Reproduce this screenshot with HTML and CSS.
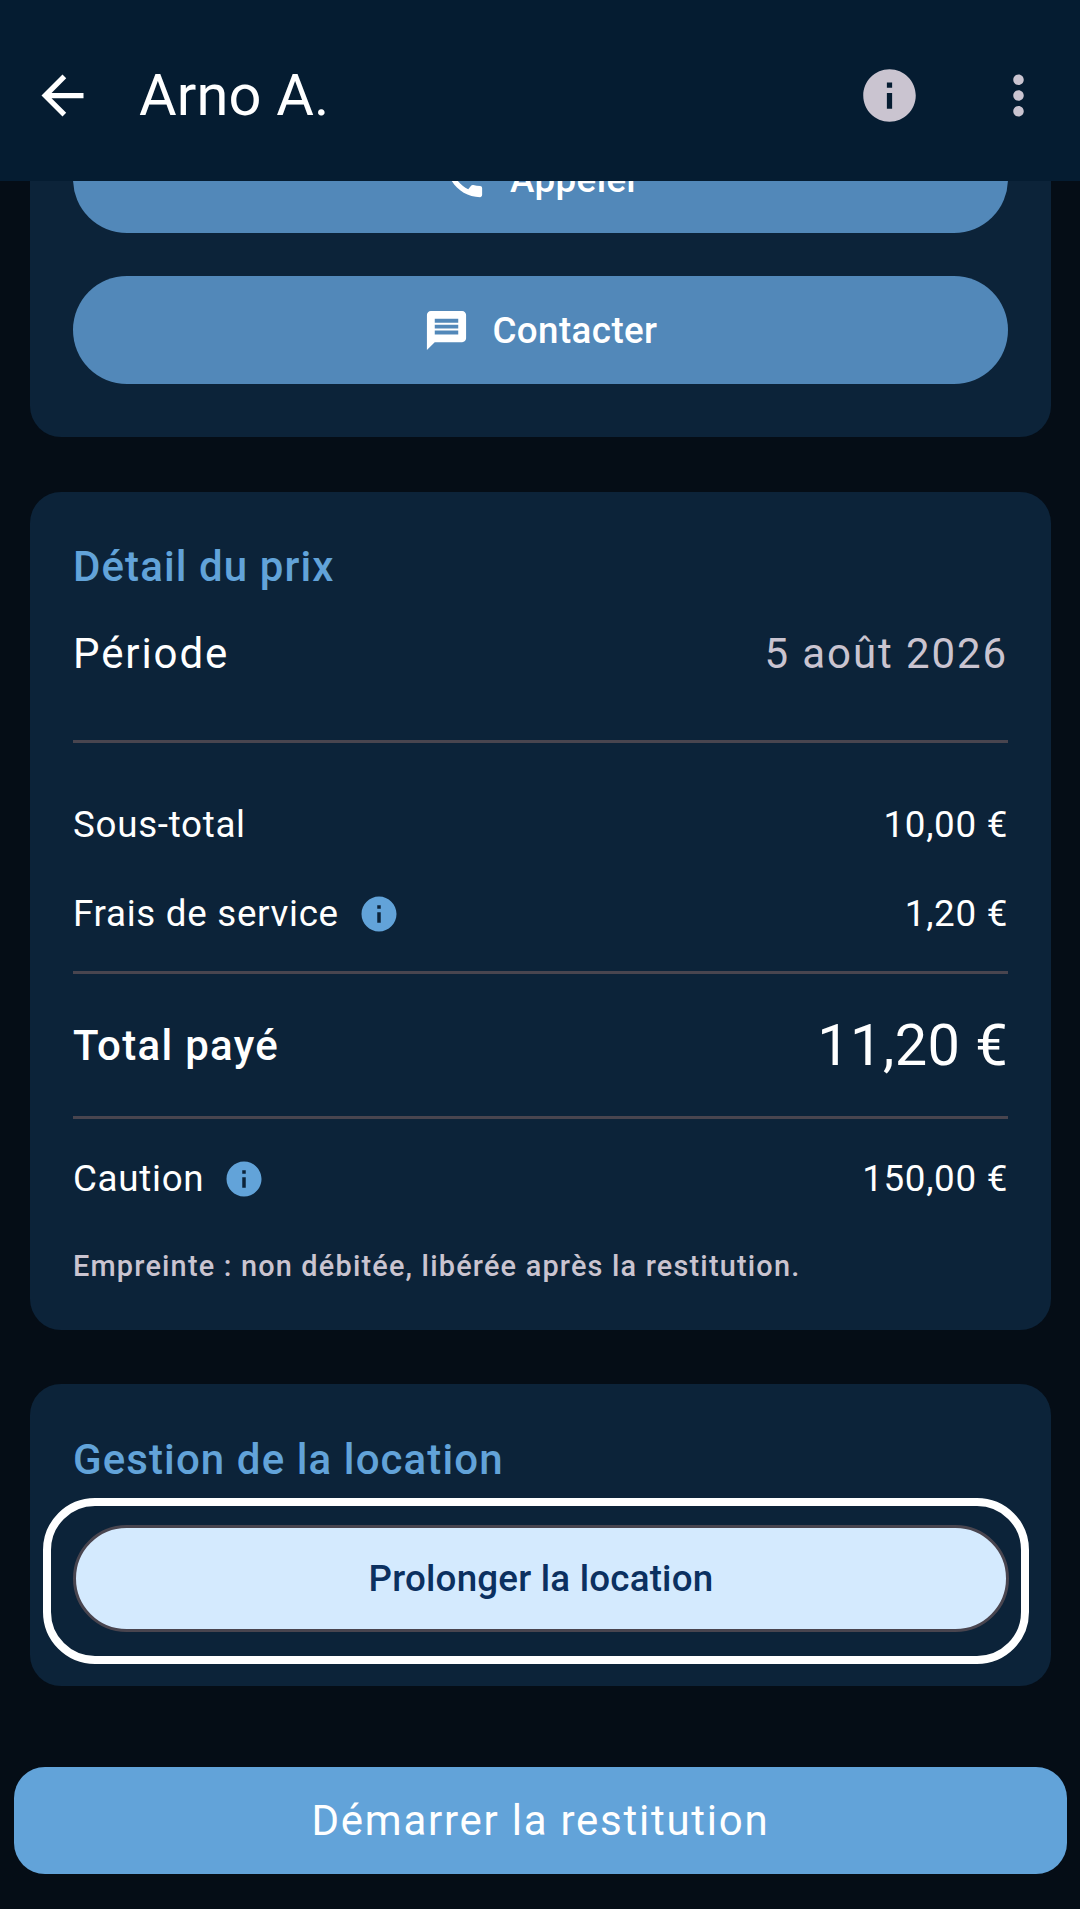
FILE: index.html
```html
<!DOCTYPE html>
<html lang="fr">
<head>
  <meta charset="UTF-8" />
  <meta name="viewport" content="width=device-width, initial-scale=1.0"/>
  <title>Arno A.</title>
  <link rel="stylesheet" href="styles.css">
</head>
<body>

  <!-- Top bar -->
  <header class="top-bar">
    <svg class="bar-icon back-icon" viewBox="0 0 24 24"><path d="M20 11H7.83l5.59-5.59L12 4l-8 8 8 8 1.41-1.41L7.83 13H20v-2z"/></svg>
    <div class="bar-title">Arno A.</div>
    <svg class="bar-icon muted-icon" viewBox="0 0 24 24"><path d="M12 2C6.48 2 2 6.48 2 12s4.48 10 10 10 10-4.48 10-10S17.52 2 12 2zm1 15h-2v-6h2v6zm0-8h-2V7h2v2z"/></svg>
    <svg class="bar-icon muted-icon more-icon" viewBox="0 0 24 24"><path d="M12 8c1.1 0 2-.9 2-2s-.9-2-2-2-2 .9-2 2 .9 2 2 2zm0 2c-1.1 0-2 .9-2 2s.9 2 2 2 2-.9 2-2-.9-2-2-2zm0 6c-1.1 0-2 .9-2 2s.9 2 2 2 2-.9 2-2-.9-2-2-2z"/></svg>
  </header>

  <main class="content">
    <!-- Contact card, scrolled under the bar -->
    <section class="card contact-card">
      <button class="contact-btn">
        <svg class="btn-icon" viewBox="0 0 24 24"><path d="M20.01 15.38c-1.23 0-2.42-.2-3.53-.56-.35-.12-.74-.03-1.01.24l-1.57 1.97c-2.83-1.35-5.48-3.9-6.89-6.83l1.95-1.66c.27-.28.35-.67.24-1.02-.37-1.11-.56-2.3-.56-3.53 0-.54-.45-.99-.99-.99H4.19C3.65 3 3 3.24 3 3.99 3 13.28 10.73 21 20.01 21c.71 0 .99-.63.99-1.18v-3.45c0-.54-.45-.99-.99-.99z"/></svg>
        Appeler
      </button>
      <button class="contact-btn">
        <svg class="btn-icon" viewBox="0 0 24 24"><path d="M20 2H4c-1.1 0-1.99.9-1.99 2L2 22l4-4h14c1.1 0 2-.9 2-2V4c0-1.1-.9-2-2-2zm-2 12H6v-2h12v2zm0-3H6V9h12v2zm0-3H6V6h12v2z"/></svg>
        Contacter
      </button>
    </section>

    <!-- Price detail -->
    <section class="card price-card">
      <h2 class="card-title">Détail du prix</h2>
      <div class="row period-row">
        <span>Période</span>
        <span class="period-value">5 août 2026</span>
      </div>
      <hr class="divider">
      <div class="row amount-row first-amount">
        <span>Sous-total</span>
        <span>10,00 €</span>
      </div>
      <div class="row amount-row">
        <span class="label-info">Frais de service
          <svg class="info-icon" viewBox="0 0 24 24"><path d="M12 2C6.48 2 2 6.48 2 12s4.48 10 10 10 10-4.48 10-10S17.52 2 12 2zm1 15h-2v-6h2v6zm0-8h-2V7h2v2z"/></svg>
        </span>
        <span>1,20 €</span>
      </div>
      <hr class="divider">
      <div class="row total-row">
        <span class="total-label">Total payé</span>
        <span class="total-value">11,20 €</span>
      </div>
      <hr class="divider">
      <div class="row amount-row caution-row">
        <span class="label-info">Caution
          <svg class="info-icon" viewBox="0 0 24 24"><path d="M12 2C6.48 2 2 6.48 2 12s4.48 10 10 10 10-4.48 10-10S17.52 2 12 2zm1 15h-2v-6h2v6zm0-8h-2V7h2v2z"/></svg>
        </span>
        <span>150,00 €</span>
      </div>
      <p class="note">Empreinte : non débitée, libérée après la restitution.</p>
    </section>

    <!-- Rental management -->
    <section class="card manage-card">
      <h2 class="card-title">Gestion de la location</h2>
      <div class="focus-ring">
        <button class="extend-btn">Prolonger la location</button>
      </div>
    </section>
  </main>

  <div class="bottom-bar">
    <button class="return-btn">Démarrer la restitution</button>
  </div>

</body>
</html>
```

FILE: styles.css
```css
* {
  box-sizing: border-box;
}

body {
  margin: 0;
  height: 1909px;
  overflow: hidden;
  display: flex;
  flex-direction: column;
  font-family: Roboto, 'Noto Sans', sans-serif;
  background: #050d16;
  color: #fff;
}

button {
  font-family: inherit;
  border: none;
  color: inherit;
}

/* Top bar */
.top-bar {
  height: 181px;
  flex-shrink: 0;
  display: flex;
  align-items: center;
  padding: 9px 30px 0 31px;
  background: #051c31;
  position: relative;
  z-index: 2;
}

.bar-icon {
  width: 63px;
  height: 63px;
  flex-shrink: 0;
}

.back-icon {
  fill: #fff;
}

.muted-icon {
  fill: #cac4d0;
}

.more-icon {
  margin-left: 66px;
}

.bar-title {
  flex: 1;
  margin-left: 45px;
  font-size: 57.75px;
  line-height: 72px;
  letter-spacing: 0.15px;
}

/* Scrolling content */
.content {
  flex: 1;
  min-height: 0;
  overflow: hidden;
  display: flex;
  flex-direction: column;
  gap: 55px;
  padding: 0 29px 0 30px;
}

.card {
  flex-shrink: 0;
  background: #0c2339;
  border-radius: 31px;
  padding: 0 43px;
}

.contact-card {
  margin-top: -56px;
  padding-bottom: 53px;
  display: flex;
  flex-direction: column;
  gap: 43px;
}

.contact-btn {
  height: 108px;
  border-radius: 54px;
  background: #5288b9;
  display: flex;
  align-items: center;
  justify-content: center;
  gap: 22px;
  font-size: 36.75px;
  font-weight: 500;
  letter-spacing: 0.4px;
}

.btn-icon {
  width: 47px;
  height: 47px;
  fill: #fff;
}

.card-title {
  margin: 0;
  font-size: 42px;
  line-height: 63px;
  font-weight: 500;
  letter-spacing: 1.1px;
  color: #62a3d9;
}

.price-card {
  height: 838px;
  padding-top: 43px;
}

.row {
  display: flex;
  justify-content: space-between;
  align-items: center;
}

.period-row {
  margin-top: 24px;
  height: 63px;
  font-size: 42px;
  letter-spacing: 1.9px;
}

.period-value {
  color: #cac4d0;
}

.divider {
  height: 3px;
  margin: 0;
  border: none;
  background: #49454f;
}

.period-row + .divider {
  margin-top: 55px;
}

.amount-row {
  height: 89px;
  font-size: 36.75px;
  letter-spacing: 0.7px;
}

.first-amount {
  margin-top: 37px;
}

.amount-row + .divider {
  margin-top: 13px;
}

.label-info {
  display: flex;
  align-items: center;
  gap: 19px;
}

.info-icon {
  width: 42px;
  height: 42px;
  fill: #62a3d9;
}

.total-row {
  height: 142px;
}

.total-label {
  font-size: 42px;
  font-weight: 500;
  letter-spacing: 1.3px;
}

.total-value {
  font-size: 57.75px;
  letter-spacing: 0.4px;
}

.caution-row {
  margin-top: 15px;
}

.note {
  margin: 22px 0 0;
  font-size: 28.875px;
  line-height: 42px;
  font-weight: 500;
  letter-spacing: 1.2px;
  color: #cac4d0;
}

.manage-card {
  height: 302px;
  margin-top: -1px;
  padding-top: 44px;
}

/* Accessibility focus highlight around the button */
.focus-ring {
  margin: 7px -21px 0 -30px;
  padding: 19px 12px 24px 22px;
  border: 8px solid #fff;
  border-radius: 52px;
}

.extend-btn {
  display: block;
  width: 100%;
  height: 107px;
  border: 3px solid #49454f;
  border-radius: 54px;
  background: #d4eafe;
  color: #0b3060;
  font-size: 36.75px;
  font-weight: 500;
  letter-spacing: 0.2px;
}

/* Bottom action */
.bottom-bar {
  flex-shrink: 0;
  padding: 0 13px 35px 14px;
}

.return-btn {
  display: block;
  width: 100%;
  height: 107px;
  border-radius: 31px;
  background: #62a3d9;
  font-size: 42px;
  letter-spacing: 1.75px;
}
```
